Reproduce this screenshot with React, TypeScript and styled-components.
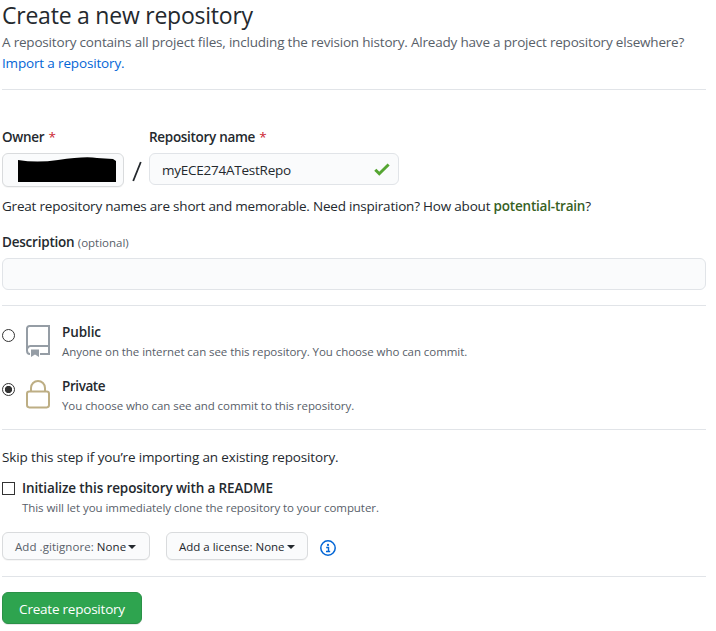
import React from 'react';
import styled, { createGlobalStyle } from 'styled-components';

const GlobalStyle = createGlobalStyle`
  * { box-sizing: border-box; }
  body {
    margin: 0;
    background: #fff;
    color: #24292e;
    font: 13.5px/21px "Open Sans", "Noto Sans", sans-serif;
    overflow: hidden;
  }
`;

type Spacing = { $track?: number };

const Page = styled.main`
  display: flex;
  flex-direction: column;
  width: 716px;
  height: 631px;
  padding: 0 10px 0 2px;
  white-space: nowrap;
`;

const Title = styled.h1`
  margin: -3px 0 -1px;
  font-size: 23px;
  font-weight: 400;
  line-height: 36px;
  letter-spacing: -0.23px;
`;

const Lead = styled.p`
  margin: 0;
  color: #586069;
`;

const Line = styled.span<Spacing>`
  display: block;
  letter-spacing: ${(p) => p.$track ?? 0}px;
`;

const Link = styled.a<Spacing>`
  color: #0366d6;
  text-decoration: none;
  letter-spacing: ${(p) => p.$track ?? 0}px;
`;

const Divider = styled.hr<{ $top: number; $bottom: number }>`
  width: 100%;
  height: 1px;
  flex: none;
  border: 0;
  margin: ${(p) => p.$top}px 0 ${(p) => p.$bottom}px;
  background: #e1e4e8;
`;

const FieldRow = styled.div`
  display: flex;
  height: 60px;
`;

const Field = styled.div`
  display: flex;
  flex-direction: column;
`;

const Label = styled.label<Spacing>`
  height: 26px;
  font-weight: 600;
  letter-spacing: ${(p) => p.$track ?? 0}px;
`;

const Required = styled.span`
  color: #cb2431;
  font-weight: 400;
  margin-left: 1px;
`;

const OwnerBox = styled.button`
  display: flex;
  width: 122px;
  height: 34px;
  padding: 3px 0 0 14px;
  border: 1px solid #d9dbdd;
  border-radius: 6px;
  background: #fafbfc;
  box-shadow: 0 1px 0 rgba(27, 31, 35, 0.04);
`;

const Slash = styled.span`
  display: flex;
  width: 25px;
  padding: 34px 0 0 8px;
`;

const InputBox = styled.div<{ $width: string } & Spacing>`
  display: flex;
  flex: none;
  align-items: center;
  justify-content: space-between;
  width: ${(p) => p.$width};
  height: 32px;
  padding: 2px 8px 0 12px;
  border: 1px solid #e1e4e8;
  border-radius: 6px;
  background: #fafbfc;
  letter-spacing: ${(p) => p.$track ?? 0}px;
`;

const Hint = styled.p<Spacing>`
  margin: 9px 0 15px;
  letter-spacing: ${(p) => p.$track ?? 0}px;
`;

const Suggestion = styled.strong`
  color: #37611f;
  font-weight: 600;
`;

const Optional = styled.span`
  color: #586069;
  font-size: 11.5px;
  font-weight: 400;
  letter-spacing: 0;
`;

const Choice = styled.div`
  display: flex;
  height: 54px;
`;

const Radio = styled.span<{ $checked?: boolean }>`
  flex: none;
  width: 13px;
  height: 13px;
  margin: 8px 11px 0 0;
  border: 1px solid #333;
  border-radius: 50%;
  background: ${(p) => (p.$checked ? 'radial-gradient(circle, #333 3.3px, #fff 4px)' : '#fff')};
`;

const IconSlot = styled.span`
  display: flex;
  width: 24px;
  margin-right: 12px;
  padding-top: 4px;
`;

const ChoiceText = styled.div<{ $top?: number }>`
  display: flex;
  flex-direction: column;
  padding-top: ${(p) => p.$top ?? 0}px;
`;

const ChoiceTitle = styled.strong<Spacing>`
  height: 20px;
  font-weight: 600;
  line-height: 20px;
  letter-spacing: ${(p) => p.$track ?? 0}px;
`;

const Note = styled.span<Spacing>`
  color: #586069;
  font-size: 11.5px;
  line-height: 19px;
  letter-spacing: ${(p) => p.$track ?? 0}px;
`;

const InitRow = styled.div`
  display: flex;
  height: 54px;
  margin-top: 10px;
`;

const Checkbox = styled.span`
  width: 13px;
  height: 13px;
  margin: 4px 7px 0 0;
  border: 1px solid #333;
  background: #fff;
`;

const Actions = styled.div`
  display: flex;
  height: 28px;
`;

const SelectButton = styled.button<{ $width: number } & Spacing>`
  display: flex;
  align-items: center;
  width: ${(p) => p.$width}px;
  height: 28px;
  margin-right: 16px;
  padding: 2px 12px 0;
  border: 1px solid #d9dbdd;
  border-radius: 6px;
  background: #fafbfc;
  box-shadow: 0 1px 0 rgba(27, 31, 35, 0.04);
  color: #24292e;
  font: 11.5px/20px "Open Sans", "Noto Sans", sans-serif;
  letter-spacing: ${(p) => p.$track ?? 0}px;
  white-space: pre;
`;

const Muted = styled.span`
  color: #586069;
`;

const Caret = styled.span`
  margin: -1px 0 0 2px;
  border: 4px solid transparent;
  border-top-color: #24292e;
  border-bottom: 0;
`;

const InfoIcon = styled.svg`
  margin: 8px 0 0 -4px;
`;

const Submit = styled.button`
  width: 140px;
  height: 32px;
  padding: 1px 0 0;
  border: 1px solid #2a9147;
  border-radius: 6px;
  background: #2ea44f;
  box-shadow: 0 1px 0 rgba(27, 31, 35, 0.1);
  color: #fff;
  font: 13.5px/20px "Open Sans", "Noto Sans", sans-serif;
  letter-spacing: -0.22px;
`;

const RepoIcon = () => (
  <svg width="24" height="32" viewBox="0 0 24 32" fill="none" stroke="#959da5" strokeWidth="2">
    <path d="M1 25.5V3.5A2.5 2.5 0 0 1 3.5 1H23v28h-9M1 25.5A4 4 0 0 1 4.5 21H23M1 25.5C1 27.5 2 29 4 29" />
    <path d="M5 24.5h8V32l-4-2.4L5 32z" fill="#959da5" stroke="none" />
  </svg>
);

const LockIcon = () => (
  <svg width="24" height="30" viewBox="0 0 24 30" fill="none" stroke="#bdae84" strokeWidth="2">
    <rect x="1" y="12.4" width="22" height="16" rx="2.3" />
    <path d="M5 12.4V9a7 7 0 0 1 14 0v3.4" />
  </svg>
);

export default function App() {
  return (
    <>
      <GlobalStyle />
      <Page>
        <Title>Create a new repository</Title>
        <Lead>
          <Line $track={-0.192}>
            A repository contains all project files, including the revision history. Already have a
            project repository elsewhere?
          </Line>
          <Link $track={-0.16}>Import a repository.</Link>
        </Lead>
        <Divider $top={15} $bottom={37} />
        <FieldRow>
          <Field>
            <Label $track={-0.3}>
              Owner <Required>*</Required>
            </Label>
            <OwnerBox aria-label="Owner">
              <svg width="100" height="26" viewBox="0 0 100 26">
                <path d="M1 3q19 3 40 0Q68-1 80 1l16 1 3 2v21H1z" fill="#000" />
              </svg>
            </OwnerBox>
          </Field>
          <Slash>
            <svg width="11" height="21" viewBox="0 0 11 21">
              <path d="M1.2 20L8.8 1" stroke="#24292e" strokeWidth="1.8" />
            </svg>
          </Slash>
          <Field>
            <Label $track={-0.3}>
              Repository name <Required>*</Required>
            </Label>
            <InputBox $width="250px" $track={-0.24}>
              <span>myECE274ATestRepo</span>
              <svg width="16" height="14" viewBox="0 0 16 14">
                <path d="M1.3 6.7l4 4L14.6 1.5" fill="none" stroke="#55a532" strokeWidth="3" />
              </svg>
            </InputBox>
          </Field>
        </FieldRow>
        <Hint $track={-0.207}>
          Great repository names are short and memorable. Need inspiration? How about{' '}
          <Suggestion>potential-train</Suggestion>?
        </Hint>
        <Label $track={-0.22}>
          Description <Optional>(optional)</Optional>
        </Label>
        <InputBox $width="100%" />
        <Divider $top={15} $bottom={15} />
        <Choice>
          <Radio />
          <IconSlot>
            <RepoIcon />
          </IconSlot>
          <ChoiceText $top={1}>
            <ChoiceTitle $track={-0.1}>Public</ChoiceTitle>
            <Note $track={-0.065}>
              Anyone on the internet can see this repository. You choose who can commit.
            </Note>
          </ChoiceText>
        </Choice>
        <Choice>
          <Radio $checked />
          <IconSlot>
            <LockIcon />
          </IconSlot>
          <ChoiceText $top={1}>
            <ChoiceTitle $track={-0.42}>Private</ChoiceTitle>
            <Note $track={-0.065}>You choose who can see and commit to this repository.</Note>
          </ChoiceText>
        </Choice>
        <Divider $top={0} $bottom={17} />
        <Line $track={-0.14}>Skip this step if you’re importing an existing repository.</Line>
        <InitRow>
          <Checkbox />
          <ChoiceText>
            <ChoiceTitle $track={-0.12}>Initialize this repository with a README</ChoiceTitle>
            <Note $track={-0.06}>
              This will let you immediately clone the repository to your computer.
            </Note>
          </ChoiceText>
        </InitRow>
        <Actions>
          <SelectButton $width={148} $track={0.06}>
            <Muted>Add .gitignore: </Muted>None
            <Caret />
          </SelectButton>
          <SelectButton $width={142}>
            Add a license: None
            <Caret />
          </SelectButton>
          <InfoIcon width="16" height="16" viewBox="0 0 16 16">
            <circle cx="8" cy="8" r="7.2" fill="none" stroke="#0366d6" strokeWidth="1.5" />
            <path d="M6.2 7.5H8.5V11.5M6 11.5h4.2" fill="none" stroke="#0366d6" strokeWidth="1.4" />
            <circle cx="8" cy="4.9" r="1.1" fill="#0366d6" />
          </InfoIcon>
        </Actions>
        <Divider $top={16} $bottom={15} />
        <Submit>Create repository</Submit>
      </Page>
    </>
  );
}
